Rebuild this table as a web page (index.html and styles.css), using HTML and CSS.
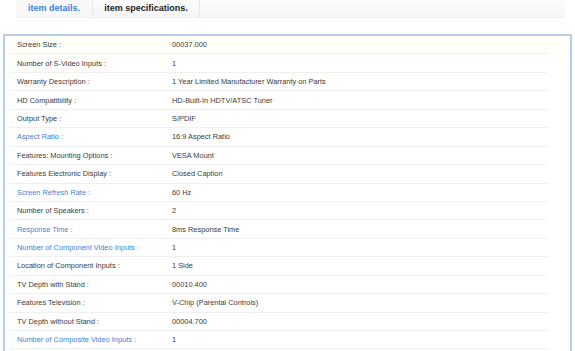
FILE: index.html
```html
<!DOCTYPE html>
<html lang="en">
<head>
<meta charset="UTF-8">
<title>Item Details</title>
<link rel="stylesheet" href="styles.css">
</head>
<body>

<!-- ===== Tabs ===== -->
<div class="tabs">
  <div class="tab active">item details.</div>
  <div class="tab">item specifications.</div>
</div>

<!-- ===== Spec table ===== -->
<div class="spec-box">
  <ul class="spec-list">
    <li><span class="label">Screen Size :</span><span>00037.000</span></li>
    <li><span class="label">Number of S-Video Inputs :</span><span>1</span></li>
    <li><span class="label">Warranty Description :</span><span>1 Year Limited Manufacturer Warranty on Parts</span></li>
    <li><span class="label">HD Compatibility :</span><span>HD-Built-In HDTV/ATSC Tuner</span></li>
    <li><span class="label">Output Type :</span><span>S/PDIF</span></li>
    <li><span class="label link">Aspect Ratio :</span><span>16:9 Aspect Ratio</span></li>
    <li><span class="label">Features: Mounting Options :</span><span>VESA Mount</span></li>
    <li><span class="label">Features Electronic Display :</span><span>Closed Caption</span></li>
    <li><span class="label link">Screen Refresh Rate :</span><span>60 Hz</span></li>
    <li><span class="label">Number of Speakers :</span><span>2</span></li>
    <li><span class="label link">Response Time :</span><span>8ms Response Time</span></li>
    <li><span class="label link">Number of Component Video Inputs :</span><span>1</span></li>
    <li><span class="label">Location of Component Inputs :</span><span>1 Side</span></li>
    <li><span class="label">TV Depth with Stand :</span><span>00010.400</span></li>
    <li><span class="label">Features Television :</span><span>V-Chip (Parental Controls)</span></li>
    <li><span class="label">TV Depth without Stand :</span><span>00004.700</span></li>
    <li><span class="label link">Number of Composite Video Inputs :</span><span>1</span></li>
  </ul>
</div>

</body>
</html>
```

FILE: styles.css
```css
*{box-sizing:border-box}
body,html{margin:0;padding:0}
body{
  background:#fff;color:#3a3a3a;
  font-family:"Liberation Sans",Arial,sans-serif;font-size:7.4px;
}

/* ===== Tabs ===== */
.tabs{
  display:flex;margin:0 10px 0 16px;height:18px;
  background:linear-gradient(180deg,#fcfcfc 0%,#f5f5f5 100%);
  border-bottom:1px solid #f0f0f0;
}
.tab{
  display:flex;align-items:center;justify-content:center;
  font-size:9px;font-weight:700;color:#222;white-space:nowrap;
  padding-bottom:1px;border-right:1px solid #e6e6e6;
}
.tab.active{color:#3d7fd8;background:#f8f8f8;width:77px}
.tab:not(.active){width:107px}

/* ===== Spec box ===== */
.spec-box{
  margin:16px 3px 0 3px;
  border:2px solid #b4cdec;border-bottom:none;
  background:linear-gradient(180deg,#fffef6 0%,#fff 40px);
  padding:0 22px 0 5px;
  height:317px;overflow:hidden;
}
.spec-list{list-style:none;margin:0;padding:0}
.spec-list li{
  display:grid;grid-template-columns:155px 1fr;align-items:center;
  height:18.45px;padding-left:7px;
  border-bottom:1px solid #f0f0f0;
}
.label.link{color:#3d7fd8}
```
